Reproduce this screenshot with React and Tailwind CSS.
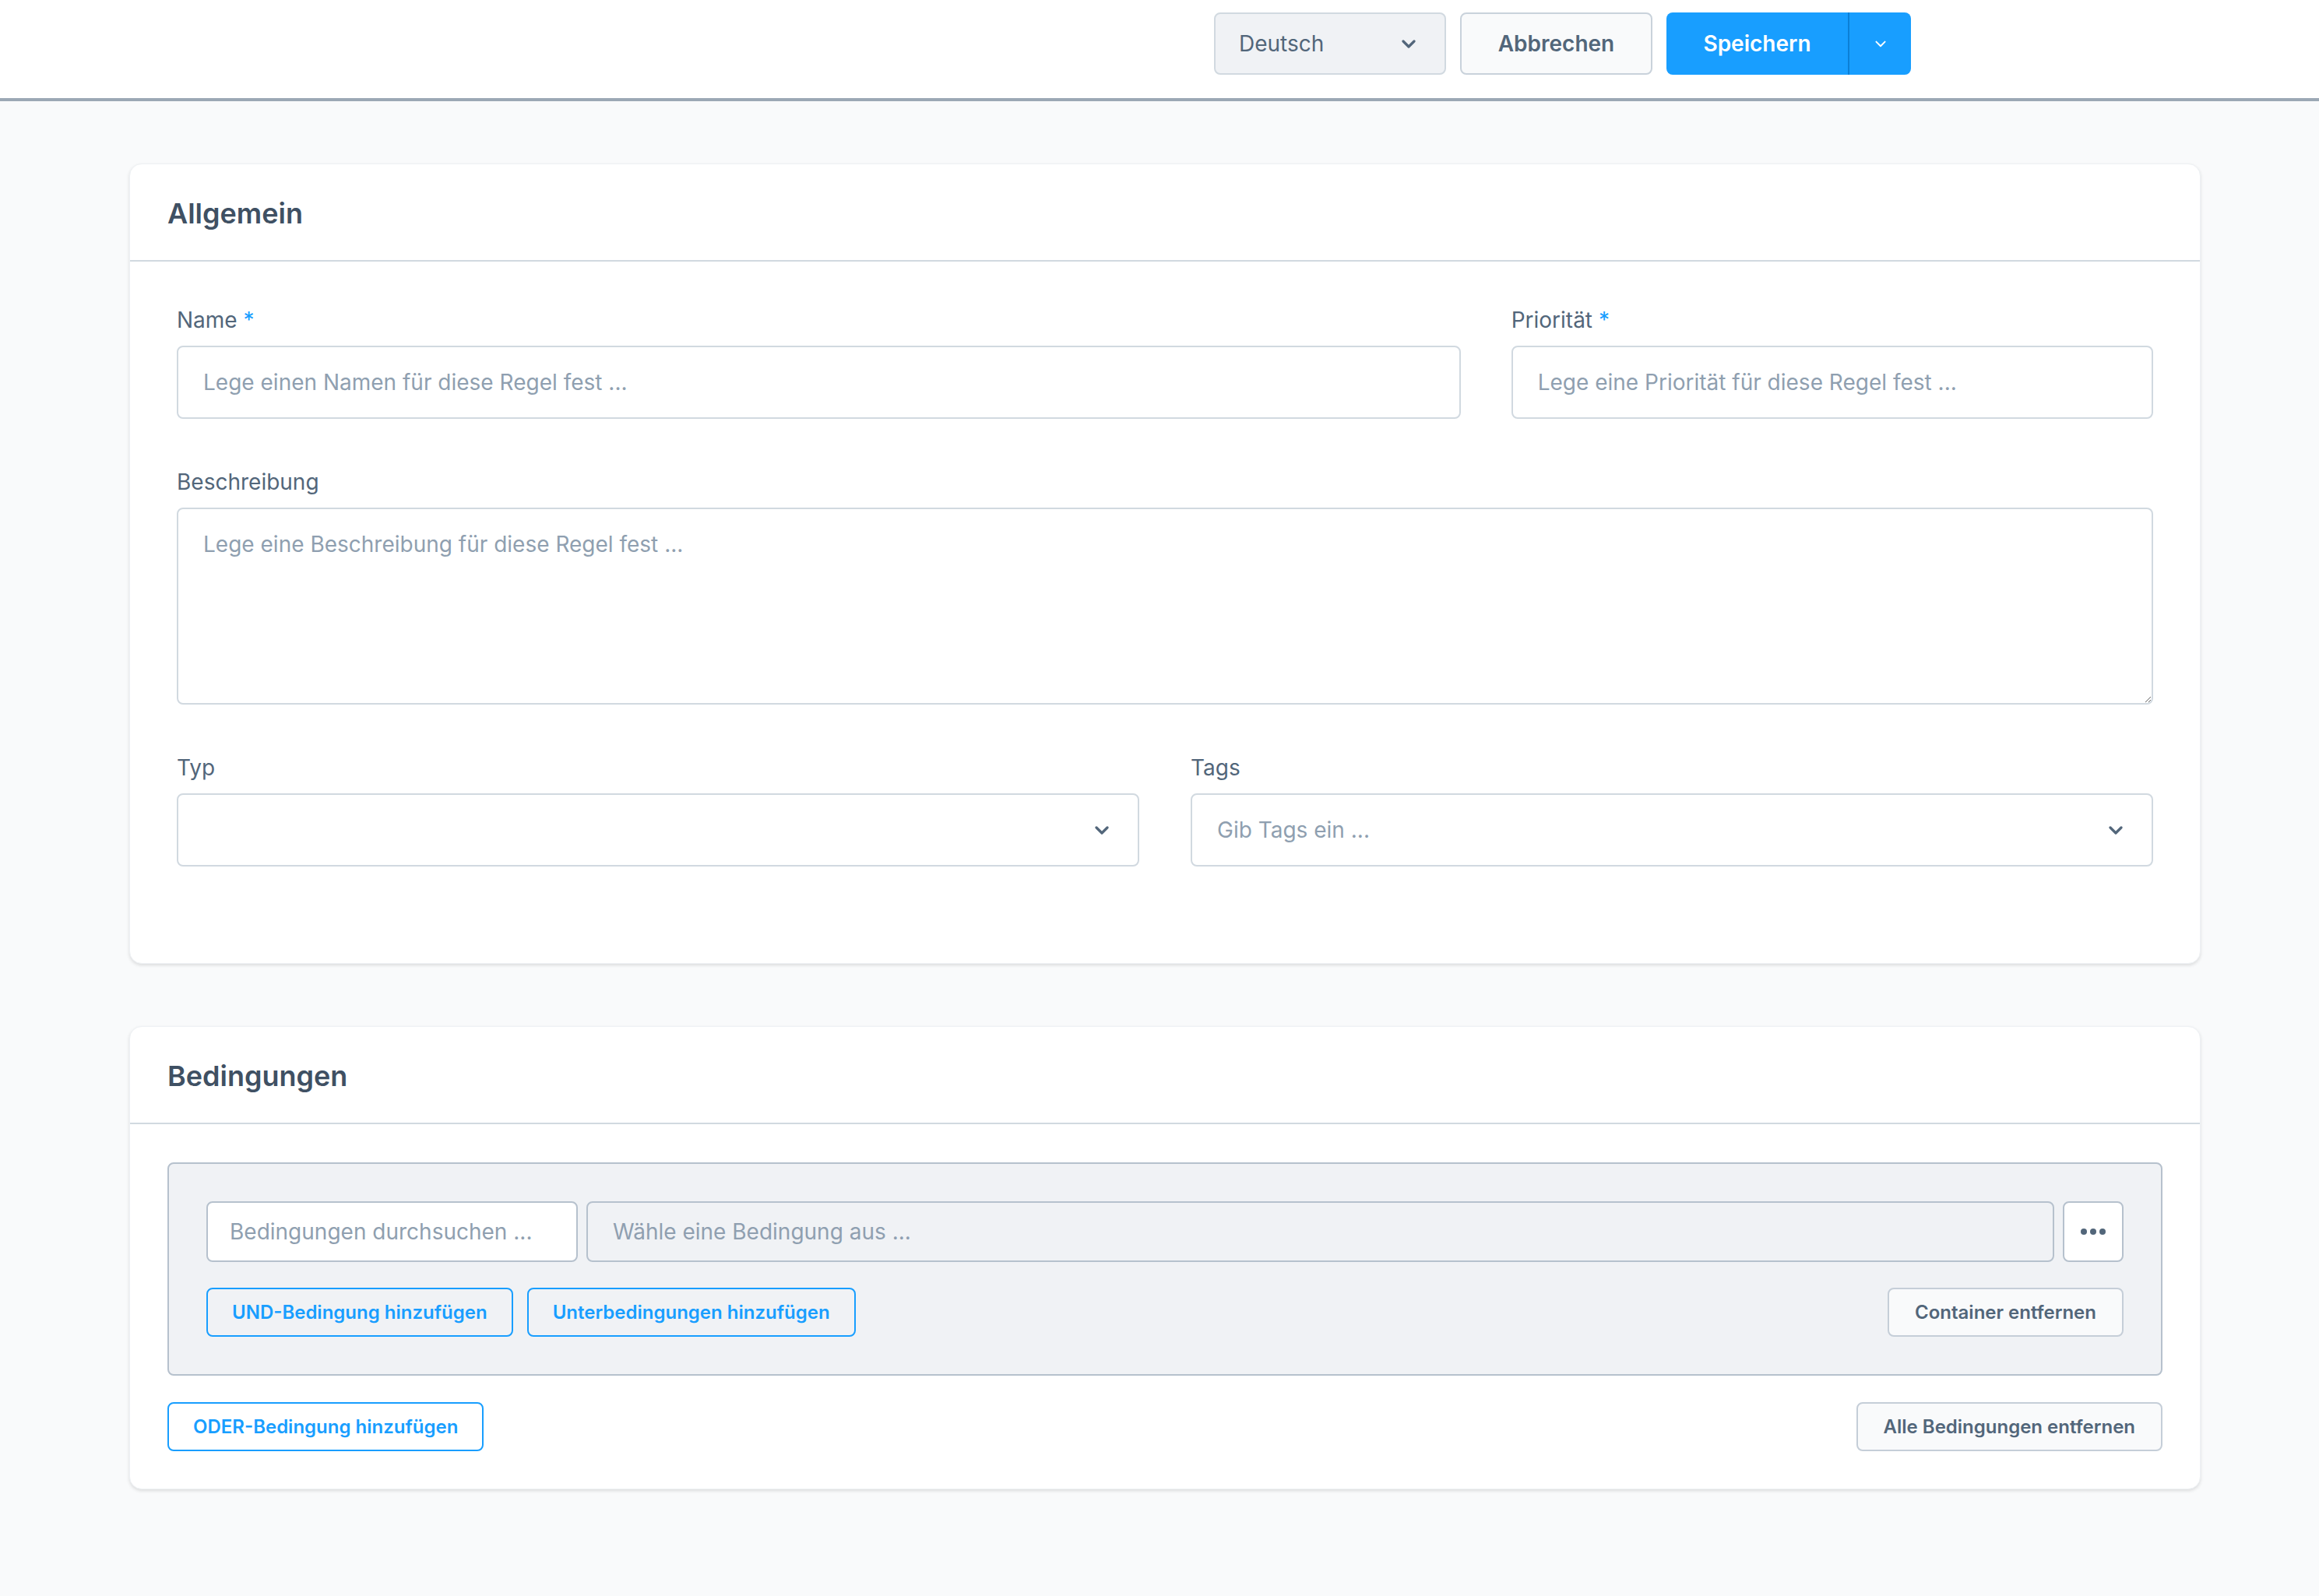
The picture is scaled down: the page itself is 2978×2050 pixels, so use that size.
import React from 'react';

const Chevron = ({ className = '', stroke = 3.2 }) => (
  <svg viewBox="0 0 20 12" className={className} fill="none">
    <path d="M3 3l7 7 7-7" stroke="currentColor" strokeWidth={stroke} strokeLinecap="round" strokeLinejoin="round" />
  </svg>
);

const Label = ({ children, required }) => (
  <div className="text-[28px] leading-[40px] text-[#52667a] mb-[13px]">
    {children}
    {required && <span className="text-[#189eff]"> *</span>}
  </div>
);

const TextField = ({ label, required, placeholder }) => (
  <div>
    <Label required={required}>{label}</Label>
    <input
      placeholder={placeholder}
      className="w-full h-[94px] px-[32px] text-[28px] text-[#52667a] bg-white border-2 border-[#d1d9e0] rounded-[8px] outline-none placeholder:text-[#8f9fb0]"
    />
  </div>
);

const SelectField = ({ label, placeholder }) => (
  <div>
    <Label>{label}</Label>
    <div className="h-[94px] pl-[32px] pr-[36px] flex items-center justify-between bg-white border-2 border-[#d1d9e0] rounded-[8px]">
      <span className="text-[28px] text-[#8f9fb0]">{placeholder}</span>
      <Chevron className="w-[20px] h-[12px] text-[#52667a]" />
    </div>
  </div>
);

const Card = ({ title, children, bodyClass }) => (
  <section className="bg-white rounded-[16px] border border-[#eef1f4] shadow-[0_2px_4px_rgba(0,0,0,0.12)]">
    <div className="h-[125px] px-[48px] flex items-center border-b-2 border-[#d1d9e0]">
      <h2 className="text-[36px] font-semibold text-[#3f5063] pt-[2px]">{title}</h2>
    </div>
    <div className={bodyClass}>{children}</div>
  </section>
);

const OutlineBlue = ({ children }) => (
  <button className="h-[63px] px-[31px] border-2 border-[#189eff] rounded-[8px] text-[24px] font-semibold text-[#189eff] bg-transparent">
    {children}
  </button>
);

const GrayButton = ({ children }) => (
  <button className="h-[63px] px-[33px] border-2 border-[#c5ced8] rounded-[8px] text-[24px] font-semibold text-[#52667a] bg-[#f9fafb]">
    {children}
  </button>
);

export default function App() {
  return (
    <div className="min-h-screen bg-[#f9fafb] font-['Inter',sans-serif]" style={{ minHeight: 2050 }}>
      <header className="h-[130px] bg-white border-b-[4px] border-[#9ba8b5] flex justify-end items-start pt-[16px] pr-[524px] gap-[18px]">
        <div className="w-[298px] h-[80px] pl-[30px] pr-[36px] flex items-center justify-between bg-[#f0f2f5] border-2 border-[#d1d9e0] rounded-[8px]">
          <span className="text-[28px] text-[#52667a]">Deutsch</span>
          <Chevron className="w-[20px] h-[12px] text-[#52667a]" />
        </div>
        <button className="w-[247px] h-[80px] bg-[#f9fafb] border-2 border-[#c9d2db] rounded-[8px] text-[28px] font-semibold text-[#52667a]">
          Abbrechen
        </button>
        <div className="flex h-[80px] rounded-[8px] overflow-hidden bg-[#189eff]">
          <button className="w-[235px] h-full text-[28px] font-semibold text-white border-r-2 border-[#0b7fd6]">
            Speichern
          </button>
          <button className="w-[79px] h-full flex items-center justify-center text-white">
            <Chevron className="w-[16px] h-[10px]" stroke={2.4} />
          </button>
        </div>
      </header>

      <main className="ml-[166px] w-[2660px] pt-[80px] pb-[100px] flex flex-col gap-[80px]">
        <Card title="Allgemein" bodyClass="px-[60px] pt-[55px] pb-[124px] flex flex-col gap-[61px]">
          <div className="grid grid-cols-[2fr_1fr] gap-x-[65px]">
            <TextField label="Name" required placeholder="Lege einen Namen für diese Regel fest ..." />
            <TextField label="Priorität" required placeholder="Lege eine Priorität für diese Regel fest ..." />
          </div>
          <div>
            <Label>Beschreibung</Label>
            <textarea
              placeholder="Lege eine Beschreibung für diese Regel fest ..."
              className="block w-full h-[253px] px-[32px] py-[25px] text-[28px] leading-[40px] text-[#52667a] bg-white border-2 border-[#d1d9e0] rounded-[8px] outline-none placeholder:text-[#8f9fb0]"
            />
          </div>
          <div className="grid grid-cols-2 gap-x-[66px]">
            <SelectField label="Typ" placeholder="" />
            <SelectField label="Tags" placeholder="Gib Tags ein ..." />
          </div>
        </Card>

        <Card title="Bedingungen" bodyClass="px-[48px] pt-[49px] pb-[48px]">
          <div className="bg-[#f0f2f5] border-2 border-[#b6c1cd] rounded-[8px] p-[48px] flex flex-col gap-[33px]">
            <div className="flex gap-[11px] h-[78px]">
              <input
                placeholder="Bedingungen durchsuchen ..."
                className="w-[477px] h-full px-[28px] text-[28px] bg-white border-2 border-[#b6c1cd] rounded-[8px] outline-none placeholder:text-[#8f9fb0]"
              />
              <div className="flex-1 h-full px-[32px] flex items-center border-2 border-[#b6c1cd] rounded-[8px] bg-[#f0f2f5]">
                <span className="text-[28px] text-[#8f9fb0]">Wähle eine Bedingung aus ...</span>
              </div>
              <button className="w-[78px] h-full flex items-center justify-center gap-[4px] bg-white border-2 border-[#b6c1cd] rounded-[8px]">
                <span className="w-[8px] h-[8px] rounded-full bg-[#52667a]" />
                <span className="w-[8px] h-[8px] rounded-full bg-[#52667a]" />
                <span className="w-[8px] h-[8px] rounded-full bg-[#52667a]" />
              </button>
            </div>
            <div className="flex items-center gap-[18px]">
              <OutlineBlue>UND-Bedingung hinzufügen</OutlineBlue>
              <OutlineBlue>Unterbedingungen hinzufügen</OutlineBlue>
              <div className="ml-auto">
                <GrayButton>Container entfernen</GrayButton>
              </div>
            </div>
          </div>
          <div className="mt-[34px] flex items-center justify-between">
            <OutlineBlue>ODER-Bedingung hinzufügen</OutlineBlue>
            <GrayButton>Alle Bedingungen entfernen</GrayButton>
          </div>
        </Card>
      </main>
    </div>
  );
}
